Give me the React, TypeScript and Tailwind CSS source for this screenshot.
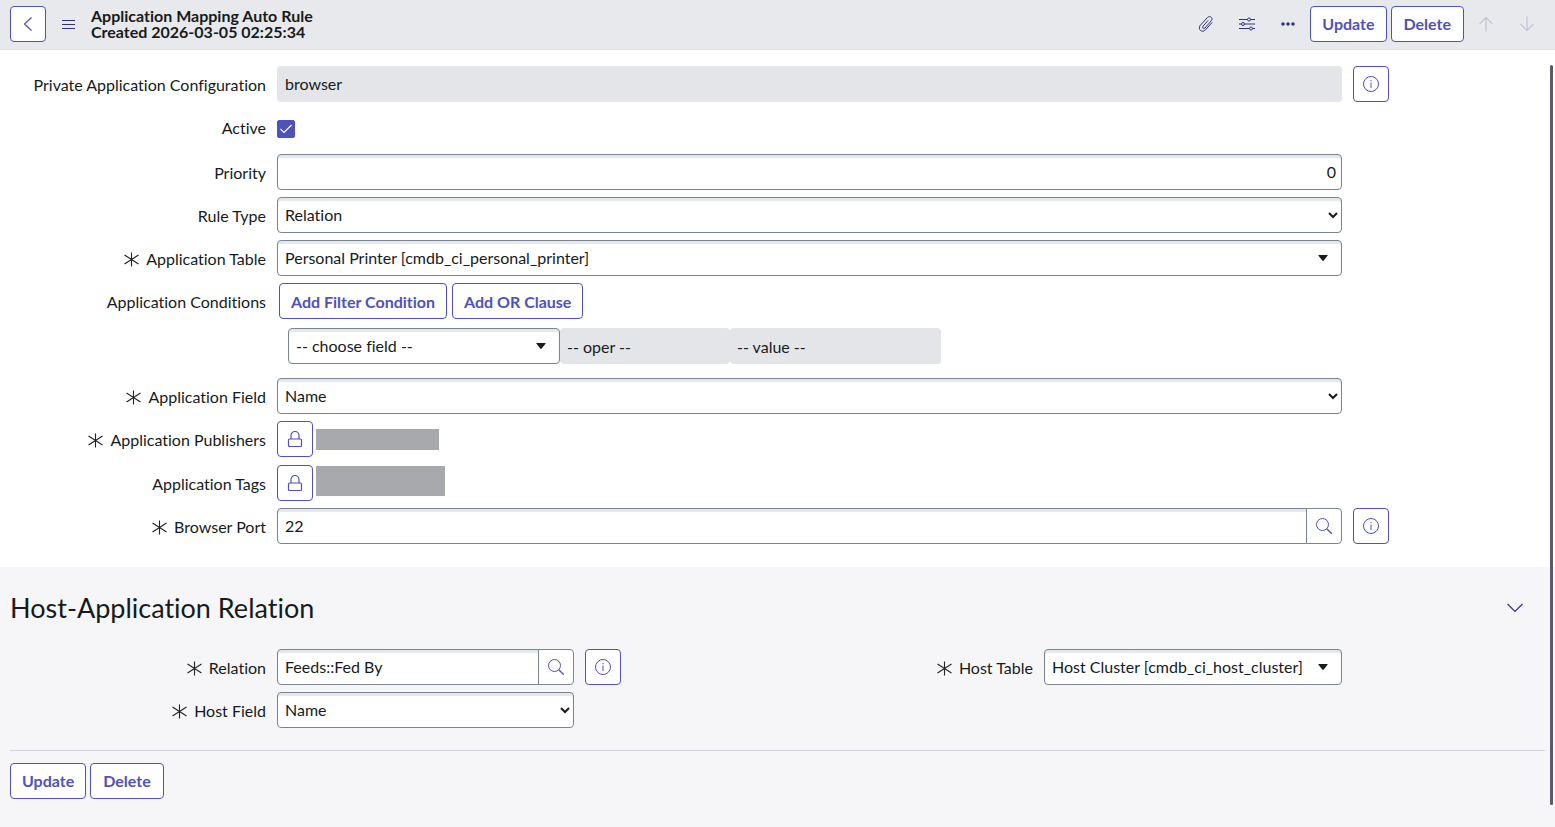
import type { ReactNode } from 'react';

const control =
  'block h-9 w-full rounded-[4px] border border-[#7c8391] bg-white text-base text-[#161b1c] shadow-[inset_0_3px_1px_0_#e5e8e9] outline-none';
const button =
  'h-9 shrink-0 rounded-[4px] border border-[#4f52bd] bg-white text-base font-bold whitespace-nowrap text-[#4f52bd] hover:bg-[#f0f0fb]';
const squareButton =
  'flex h-9 w-9 shrink-0 items-center justify-center rounded-[4px] border border-[#4f52bd] bg-white text-[#4f52bd] hover:bg-[#f0f0fb]';
const plainButton = 'flex h-9 w-9 shrink-0 items-center justify-center text-[#32327f]';

function Icon({ size = 16, children }: { size?: number; children: ReactNode }) {
  return (
    <svg
      width={size}
      height={size}
      viewBox={`0 0 ${size} ${size}`}
      fill="none"
      stroke="currentColor"
      className="shrink-0"
      aria-hidden="true"
    >
      {children}
    </svg>
  );
}

function InfoIcon() {
  return (
    <Icon>
      <circle cx="8" cy="8" r="7.5" />
      <path d="M8 6.5V12" />
      <path d="M8 4v1.2" />
    </Icon>
  );
}

function SearchIcon() {
  return (
    <Icon>
      <circle cx="6.5" cy="6.5" r="6" />
      <path d="M10.8 10.8l5 5" strokeWidth="1.3" />
    </Icon>
  );
}

function LockIcon() {
  return (
    <Icon>
      <rect x="1.5" y="8" width="13" height="7.5" rx="1" strokeWidth="1.2" />
      <path d="M4 8V4.5a4 4 0 0 1 8 0V8" strokeWidth="1.2" />
    </Icon>
  );
}

function Required() {
  return (
    <Icon size={15}>
      <path d="M7.5 0.5v14M0.5 3l14 9M0.5 12l14-9" stroke="#1f2426" strokeWidth="1.1" />
    </Icon>
  );
}

interface LabelProps {
  htmlFor: string;
  required?: boolean;
  children: ReactNode;
}

function Label({ htmlFor, required, children }: LabelProps) {
  return (
    <label htmlFor={htmlFor} className="flex h-9 items-center justify-end gap-[7px] pt-0.5 whitespace-nowrap">
      {required && <Required />}
      {children}
    </label>
  );
}

interface FieldProps {
  id: string;
  label: string;
  required?: boolean;
  aside?: ReactNode;
  children: ReactNode;
}

function Field({ id, label, required, aside, children }: FieldProps) {
  return (
    <div className="grid grid-cols-[minmax(0,266fr)_minmax(0,1065fr)_minmax(0,202fr)] gap-x-[11px]">
      <Label htmlFor={id} required={required}>{label}</Label>
      <div>{children}</div>
      <div>{aside}</div>
    </div>
  );
}

function NativeSelect({ id, value }: { id: string; value: string }) {
  return (
    <select id={id} className={`${control} px-[3px] pb-px`} defaultValue={value}>
      <option>{value}</option>
    </select>
  );
}

// Searchable pickers show a filled triangle instead of the browser's chevron
function PickerSelect({ id, value }: { id: string; value: string }) {
  return (
    <div className="relative w-full">
      <select id={id} className={`${control} appearance-none pr-8 pl-[7px]`} defaultValue={value}>
        <option>{value}</option>
      </select>
      <svg
        width="10"
        height="6"
        viewBox="0 0 10 6"
        className="pointer-events-none absolute top-[15px] right-[14px] fill-[#161b1c]"
        aria-hidden="true"
      >
        <path d="M0.8 0h8.4q.8 0 .3.7L5.7 5.6q-.7.7-1.4 0L.5.7Q0 0 .8 0z" />
      </svg>
    </div>
  );
}

function LookupInput({ id, value }: { id: string; value: string }) {
  return (
    <div className="flex">
      <input id={id} type="text" defaultValue={value} className={`${control} min-w-0 flex-1 rounded-r-none px-[7px] pb-0.5`} />
      <button
        type="button"
        aria-label="Lookup using list"
        className="-ml-px flex h-9 w-9 shrink-0 items-center justify-center rounded-r-[4px] border border-[#7c8391] bg-white text-[#4f52bd]"
      >
        <SearchIcon />
      </button>
    </div>
  );
}

function InfoButton() {
  return (
    <button type="button" aria-label="Preview this record" className={squareButton}>
      <InfoIcon />
    </button>
  );
}

function LockedList({ id, children }: { id: string; children: ReactNode }) {
  return (
    <div className="flex items-start gap-[3px]">
      <button id={id} type="button" aria-label="Unlock" className={squareButton}>
        <LockIcon />
      </button>
      {children}
    </div>
  );
}

function FormActions() {
  return (
    <div className="flex gap-1">
      <button type="button" className={`${button} px-[11px]`}>Update</button>
      <button type="button" className={`${button} px-3`}>Delete</button>
    </div>
  );
}

export default function App() {
  return (
    <div className="relative flex min-h-screen flex-col bg-[#f6f6f8] font-['Lato',sans-serif] text-base text-[#161b1c] [font-variant-ligatures:none]">
      <header className="flex h-[50px] items-center justify-between border-b border-[#e0e1e6] bg-[#e8e9ed] px-2.5 pb-px">
        <div className="flex items-center">
          <button type="button" aria-label="Back" className={squareButton}>
            <Icon>
              <path d="M11.5 1.5L4.5 8l7 6.5" strokeWidth="1.2" />
            </Icon>
          </button>
          <button type="button" aria-label="Additional actions" className={`${plainButton} ml-1`}>
            <Icon size={13}>
              <path d="M0 2.5h13M0 6.5h13M0 10.5h13" />
            </Icon>
          </button>
          <h1 className="ml-[5px] text-base leading-4 font-bold">
            Application Mapping Auto Rule
            <br />
            Created 2026-03-05 02:25:34
          </h1>
        </div>

        <div className="flex items-center gap-1">
          <div className="flex items-center gap-[5px]">
            <button type="button" aria-label="Manage attachments" className={plainButton}>
              <Icon>
                <path d="M10.2 4.4L5 10.2c-1.2 1.5.7 3.1 2 1.8l6.3-7.2c2.2-2.9-1.4-5.8-3.9-3.2L2.3 9.3c-3.1 4 1.6 8 5 4.700l6.9-7.6" />
              </Icon>
            </button>
            <button type="button" aria-label="Personalize form" className={plainButton}>
              <Icon>
                <path d="M0 3.5h8.5M11.5 3.5H16M0 8h2.5M5.5 8H16M0 12.5h10.5M13.5 12.5H16" strokeWidth="1.2" />
                <circle cx="10" cy="3.5" r="1.5" />
                <circle cx="4" cy="8" r="1.5" />
                <circle cx="12" cy="12.5" r="1.5" />
              </Icon>
            </button>
            <button type="button" aria-label="More options" className={plainButton}>
              <Icon>
                <g fill="currentColor" stroke="none">
                  <circle cx="3" cy="8" r="1.8" />
                  <circle cx="8" cy="8" r="1.8" />
                  <circle cx="13" cy="8" r="1.8" />
                </g>
              </Icon>
            </button>
          </div>
          <FormActions />
          <div className="flex items-center gap-[5px]">
            <button type="button" disabled aria-label="Previous record" className={`${plainButton} opacity-20`}>
              <Icon>
                <path d="M8 15.5V1.5M1.5 8L8 1.5 14.5 8" strokeWidth="1.2" />
              </Icon>
            </button>
            <button type="button" disabled aria-label="Next record" className={`${plainButton} opacity-20`}>
              <Icon>
                <path d="M8 .5v14M1.5 8L8 14.5 14.5 8" strokeWidth="1.2" />
              </Icon>
            </button>
          </div>
        </div>
      </header>

      <form className="flex flex-col">
        <div className="flex flex-col gap-[7px] bg-white pt-4 pb-[23px]">
          <Field id="config" label="Private Application Configuration" aside={<InfoButton />}>
            <input
              id="config"
              type="text"
              readOnly
              defaultValue="browser"
              className="block h-9 w-full rounded-[4px] bg-[#e4e5e9] px-2 pb-0.5 text-base outline-none"
            />
          </Field>

          <Field id="active" label="Active">
            <div className="relative flex h-[38px] items-center pt-0.5">
              <input
                id="active"
                type="checkbox"
                defaultChecked
                className="peer h-[18px] w-[18px] appearance-none rounded-[2px] border border-[#4f52bd] bg-white checked:bg-[#4f52bd]"
              />
              <svg
                width="18"
                height="18"
                viewBox="0 0 18 18"
                fill="none"
                className="pointer-events-none absolute left-0 hidden stroke-white peer-checked:block"
                aria-hidden="true"
              >
                <path d="M3.5 9l3.5 3.5L14.5 5" strokeWidth="1.2" />
              </svg>
            </div>
          </Field>

          <Field id="priority" label="Priority">
            <input id="priority" type="text" defaultValue="0" className={`${control} pr-[5px] pb-0.5 pl-[7px] text-right`} />
          </Field>

          <Field id="rule-type" label="Rule Type">
            <NativeSelect id="rule-type" value="Relation" />
          </Field>

          <Field id="app-table" label="Application Table" required>
            <PickerSelect id="app-table" value="Personal Printer [cmdb_ci_personal_printer]" />
          </Field>

          <Field id="condition-field" label="Application Conditions">
            <div className="flex flex-col gap-[9px] pb-[7px]">
              <div className="flex gap-[5px] pl-0.5">
                <button type="button" className={`${button} px-[11px] pt-px`}>Add Filter Condition</button>
                <button type="button" className={`${button} px-[11px] pt-px`}>Add OR Clause</button>
              </div>
              <div className="flex pl-[11px]">
                <div className="w-[272px]">
                  <PickerSelect id="condition-field" value="-- choose field --" />
                </div>
                <input
                  type="text"
                  aria-label="Operator"
                  readOnly
                  defaultValue="-- oper --"
                  className="h-9 w-[170px] rounded-[4px] bg-[#e4e5e9] px-[7px] outline-none"
                />
                <input
                  type="text"
                  aria-label="Value"
                  readOnly
                  defaultValue="-- value --"
                  className="h-9 w-[211px] rounded-[4px] bg-[#e4e5e9] px-[7px] outline-none"
                />
              </div>
            </div>
          </Field>

          <Field id="app-field" label="Application Field" required>
            <NativeSelect id="app-field" value="Name" />
          </Field>

          <Field id="publishers" label="Application Publishers" required>
            <div className="pb-px">
              <LockedList id="publishers">
                <div className="mt-2 h-[21px] w-[123px] bg-[#a8a9ad]" />
              </LockedList>
            </div>
          </Field>

          <Field id="tags" label="Application Tags">
            <LockedList id="tags">
              <div className="mt-px h-[30px] w-[129px] bg-[#a8a9ad]" />
            </LockedList>
          </Field>

          <Field id="port" label="Browser Port" required aside={<InfoButton />}>
            <LookupInput id="port" value="22" />
          </Field>
        </div>

        <section className="pt-[23px]">
          <div className="flex items-center justify-between pr-8 pl-2.5">
            <h2 className="text-[27px] leading-9">Host-Application Relation</h2>
            <button type="button" aria-label="Collapse section" className="text-[#32327f]">
              <Icon>
                <path d="M0.5 4L8 11.5 15.5 4" strokeWidth="1.2" />
              </Icon>
            </button>
          </div>

          <div className="mt-[23px] grid grid-cols-[minmax(0,266fr)_minmax(0,297fr)_minmax(0,448fr)_minmax(0,298fr)_minmax(0,202fr)] gap-x-[11px] gap-y-[7px]">
            <Label htmlFor="relation" required>Relation</Label>
            <LookupInput id="relation" value="Feeds::Fed By" />
            <div className="flex justify-between">
              <InfoButton />
              <Label htmlFor="host-table" required>Host Table</Label>
            </div>
            <PickerSelect id="host-table" value="Host Cluster [cmdb_ci_host_cluster]" />
            <div />
            <Label htmlFor="host-field" required>Host Field</Label>
            <NativeSelect id="host-field" value="Name" />
          </div>
        </section>

        <footer className="mx-2.5 mt-[22px] border-t border-[#d3d4dc] pt-3">
          <FormActions />
        </footer>
      </form>

      {/* Overlay scrollbar */}
      <div className="absolute top-[65px] right-0.5 bottom-[22px] w-[3px] rounded-full bg-[#5b5a6c]" />
    </div>
  );
}
